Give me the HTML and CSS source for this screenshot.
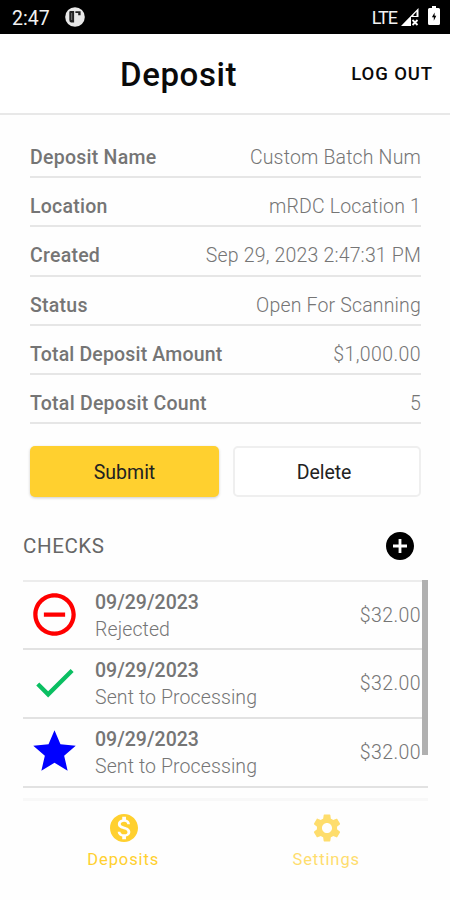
FILE: index.html
```html
<!DOCTYPE html>
<html lang="en">
<head>
<meta charset="utf-8">
<title>Deposit</title>
<link rel="stylesheet" href="styles.css">
</head>
<body>
<div class="status">
  <span class="clock">2:47</span>
  <svg class="app-dot" viewBox="0 0 20 20"><circle cx="10" cy="10" r="9.8" fill="#e8e8e8"/><path d="M4.300 5Q4.300 4 5.300 4h3.800v11.500H6Q4.300 15 4.300 13z" fill="#222"/><path d="M6 6h1.200v7H6z" fill="#666"/><path d="M10.400 4.200h5.200v4h-2.400V6h-2.800z" fill="#222"/></svg>
  <span class="lte">LTE</span>
  <svg class="signal" viewBox="0 0 18 18"><path d="M0 18 17.500 0v9H10v9z" fill="#fff"/><path d="m11.500 12 5 5m0-5-5 5" stroke="#fff" stroke-width="1.800"/><path d="m12.500 7 3-3.200V8h-3z" fill="#000"/></svg>
  <svg class="battery" viewBox="0 0 12 19"><path d="M4 0h4v2h2.500Q12 2 12 3.500v14Q12 19 10.500 19h-9Q0 19 0 17.500v-14Q0 2 1.500 2H4z" fill="#fff"/><path d="M6.600 6.500 3.900 11.200h1.900v3.500l2.500-4.900H6.600z" fill="#000"/></svg>
</div>
<header class="header"><h1>Deposit</h1><span class="logout">LOG OUT</span></header>
<main>
  <dl class="details">
    <div class="row"><dt>Deposit Name</dt><dd>Custom Batch Num</dd></div>
    <div class="row"><dt>Location</dt><dd>mRDC Location 1</dd></div>
    <div class="row"><dt>Created</dt><dd>Sep 29, 2023 2:47:31 PM</dd></div>
    <div class="row"><dt>Status</dt><dd>Open For Scanning</dd></div>
    <div class="row"><dt class="long">Total Deposit Amount</dt><dd class="money">$1,000.00</dd></div>
    <div class="row"><dt>Total Deposit Count</dt><dd>5</dd></div>
  </dl>
  <div class="buttons"><button class="submit">Submit</button><button class="delete">Delete</button></div>
  <div class="section"><h2>CHECKS</h2>
    <svg class="add" viewBox="2 2 20 20"><path d="M12 2C6.480 2 2 6.480 2 12s4.480 10 10 10 10-4.480 10-10S17.520 2 12 2zm5 11h-4v4h-2v-4H7v-2h4V7h2v4h4v2z"/></svg>
  </div>
  <div class="list">
    <div class="check">
      <svg class="icon" viewBox="0 0 24 24" fill="#f00"><path d="M7 11v2h10v-2H7zm5-9C6.480 2 2 6.480 2 12s4.480 10 10 10 10-4.480 10-10S17.520 2 12 2zm0 18c-4.410 0-8-3.590-8-8s3.590-8 8-8 8 3.590 8 8-3.590 8-8 8z"/></svg>
      <div class="info"><b>09/29/2023</b><span>Rejected</span></div><span class="amount">$32.00</span>
    </div>
    <div class="check">
      <svg class="icon" viewBox="0 0 24 24" fill="#0abf62"><path d="M9 16.170 4.830 12l-1.420 1.410L9 19 21 7l-1.410-1.410z"/></svg>
      <div class="info"><b>09/29/2023</b><span>Sent to Processing</span></div><span class="amount">$32.00</span>
    </div>
    <div class="check">
      <svg class="icon" viewBox="0 0 24 24" fill="#00f"><path d="M12 17.270 18.180 21l-1.640-7.030L22 9.240l-7.190-.61L12 2 9.190 8.630 2 9.240l5.460 4.730L5.820 21z"/></svg>
      <div class="info"><b>09/29/2023</b><span>Sent to Processing</span></div><span class="amount">$32.00</span>
    </div>
    <div class="thumb"></div>
  </div>
</main>
<nav class="tabs">
  <div class="tab">
    <svg viewBox="2 2 20 20"><path d="M12 2C6.480 2 2 6.480 2 12s4.480 10 10 10 10-4.480 10-10S17.520 2 12 2zm1.410 16.090V20h-2.670v-1.930c-1.710-.36-3.160-1.460-3.270-3.400h1.960c.1 1.050.82 1.870 2.650 1.870 1.960 0 2.400-.98 2.400-1.590 0-.83-.44-1.610-2.670-2.140-2.480-.6-4.180-1.620-4.180-3.670 0-1.720 1.390-2.840 3.110-3.210V4h2.670v1.950c1.860.45 2.790 1.860 2.850 3.390H14.300c-.05-1.110-.64-1.870-2.220-1.870-1.500 0-2.400.68-2.400 1.640 0 .84.65 1.390 2.670 1.910s4.180 1.390 4.180 3.910c-.01 1.830-1.380 2.830-3.120 3.160z"/></svg>
    <span>Deposits</span>
  </div>
  <div class="tab off">
    <svg viewBox="2 2 20 20"><path d="M19.140 12.940c.04-.3.06-.61.06-.94 0-.32-.02-.64-.07-.94l2.030-1.580c.18-.14.23-.41.12-.61l-1.920-3.320c-.12-.22-.37-.29-.59-.22l-2.390.96c-.5-.38-1.030-.7-1.620-.94l-.36-2.540c-.04-.24-.24-.41-.48-.41h-3.840c-.24 0-.43.17-.47.41l-.36 2.540c-.59.24-1.130.57-1.620.94l-2.390-.96c-.22-.08-.47 0-.59.22L2.740 8.870c-.12.21-.08.47.12.61l2.030 1.580c-.05.3-.09.63-.09.94s.02.64.07.94l-2.030 1.580c-.18.14-.23.41-.12.61l1.920 3.320c.12.22.37.29.59.22l2.390-.96c.5.38 1.030.7 1.620.94l.36 2.540c.05.24.24.41.48.41h3.840c.24 0 .44-.17.47-.41l.36-2.540c.59-.24 1.130-.56 1.620-.94l2.390.96c.22.08.47 0 .59-.22l1.920-3.320c.12-.22.07-.47-.12-.61l-2.010-1.580zM12 15.600c-1.980 0-3.600-1.620-3.600-3.600s1.620-3.600 3.600-3.600 3.600 1.620 3.600 3.600-1.620 3.600-3.600 3.600z"/></svg>
    <span>Settings</span>
  </div>
</nav>
</body>
</html>
```
FILE: styles.css
```css
* { box-sizing: border-box; }
body {
  margin: 0;
  width: 450px;
  height: 900px;
  overflow: hidden;
  background: #fefefe;
  color: #757575;
  font-family: Roboto, "Liberation Sans", sans-serif;
  font-size: 19.5px;
}
h1, h2, dl, dd { margin: 0; }
svg { display: block; flex: none; }
.status {
  display: flex;
  align-items: center;
  height: 34px;
  padding: 0 10px 0 12px;
  background: #000;
  color: #f2f2f2;
}
.clock { font-size: 19.5px; width: 53px; padding-top: 2px; }
.app-dot { width: 20px; height: 20px; }
.lte { margin-left: auto; font-size: 18px; letter-spacing: -1px; }
.signal { width: 18px; height: 18px; margin-left: 4px; }
.battery { width: 12px; height: 19px; margin: -4px 0 0 9px; }
.header {
  display: flex;
  align-items: center;
  height: 81px;
  padding: 0 17px 0 120px;
  background: #fff;
  border-bottom: 2px solid #e8e8e8;
  color: #0a0a0a;
}
h1 { padding-top: 2px; font-size: 33px; font-weight: 500; line-height: 40px; letter-spacing: 0.6px; }
.logout { margin-left: auto; padding-top: 1px; font-size: 18.5px; font-weight: 500; letter-spacing: 0.9px; }
.details { margin: 14px 29px 0 30px; }
.row {
  display: flex;
  justify-content: space-between;
  height: 49.2px;
  padding-top: 17px;
  line-height: 24px;
  border-bottom: 2px solid #e6e6e6;
}
dt { font-weight: 500; letter-spacing: 0.25px; white-space: nowrap; }
.long { letter-spacing: 0.17px; }
dd { font-weight: 300; letter-spacing: 0.17px; white-space: nowrap; }
.money { letter-spacing: 0.4px; }
.buttons { display: flex; gap: 14px; margin: 22px 29px 0 30px; }
button {
  height: 51px;
  padding: 1px 0 0;
  border: 0;
  border-radius: 5px;
  font: inherit;
  color: #222;
}
.submit { width: 189px; background: #ffd02f; box-shadow: 0 1px 3px #0003; }
.delete { width: 188px; padding-right: 6px; background: #fff; border: 2px solid #efefef; letter-spacing: -0.1px; }
.section {
  display: flex;
  justify-content: space-between;
  align-items: center;
  height: 28px;
  margin: 35px 36px 0 23px;
}
h2 { font-size: 20.5px; font-weight: 400; letter-spacing: 0.6px; color: #666; }
.add { width: 28px; height: 28px; }
.list { position: relative; margin: 20px 22px 0 23px; border-top: 2px solid #ececec; }
.check {
  display: flex;
  align-items: center;
  height: 69px;
  padding: 1px 7px 0 6px;
  border-bottom: 2px solid #e2e2e2;
}
.check:first-child { height: 67.4px; padding-top: 2px; }
.icon { width: 51px; height: 51px; margin-top: -3px; }
.info { display: flex; flex-direction: column; margin-left: 15px; line-height: 27px; }
.info b { font-weight: 500; }
.info span { font-weight: 300; letter-spacing: 0.1px; }
.amount { margin-left: auto; font-weight: 300; letter-spacing: 0.4px; }
.thumb { position: absolute; right: 0; top: -2px; width: 6px; height: 175px; background: #b0b0b0; }
.tabs {
  display: flex;
  margin: 10px 22px 0 23px;
  padding-top: 13px;
  border-top: 3px solid #f8f8f8;
}
.tab { flex: 1; display: flex; flex-direction: column; align-items: center; font-size: 16.5px; letter-spacing: 0.9px; color: #ffd02f; }
.tab svg { width: 28px; height: 28px; fill: currentColor; }
.tab span { margin: 8px 2px 0 0; }
.off { opacity: 0.7; }
.off span { margin-right: 1px; }
```
